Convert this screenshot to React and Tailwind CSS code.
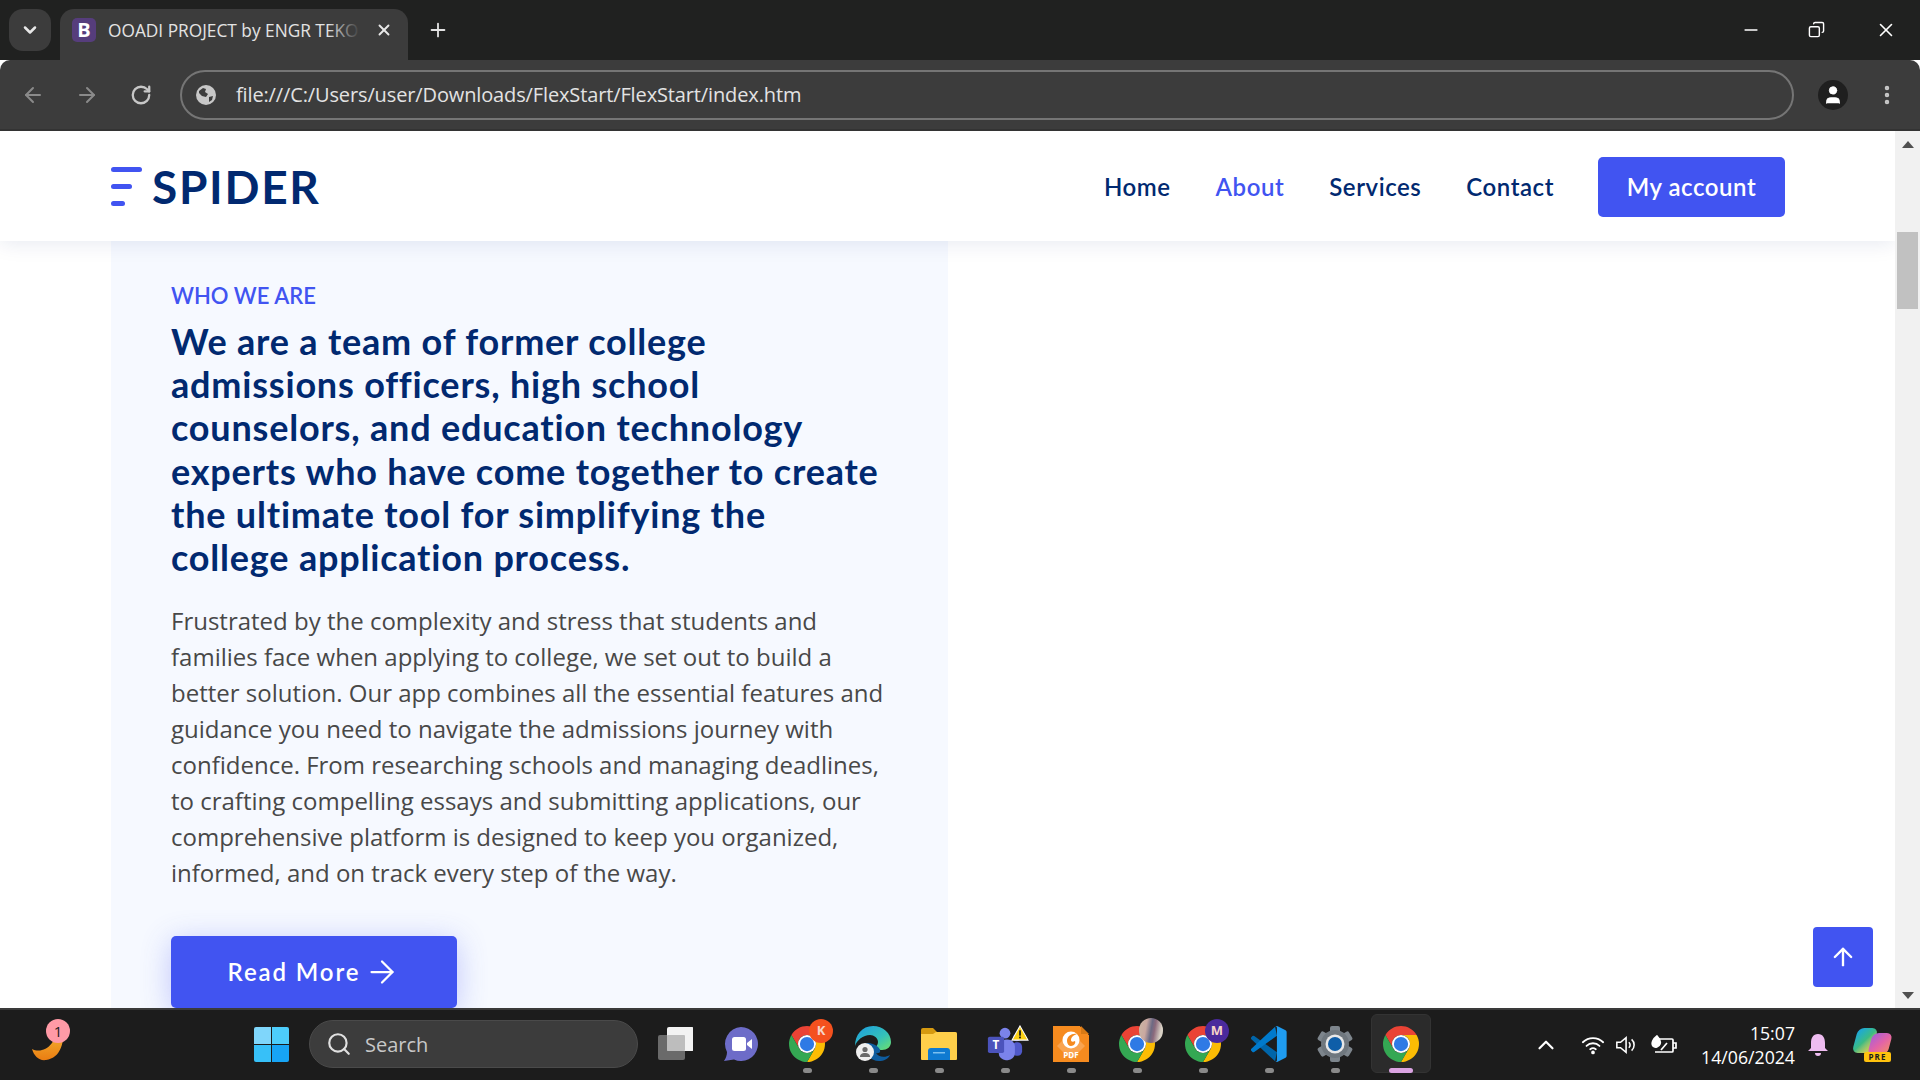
import React from "react";
import { ArrowLeft, ArrowRight, ArrowUp, ChevronDown, ChevronUp, MoreVertical, Plus, RotateCw, Search, User, X, Copy, Minus } from "lucide-react";

const headingFont = "font-['Lato',sans-serif]";

const ChromeLogo = () => (
  <svg viewBox="0 0 48 48" className="w-9 h-9">
    <path fill="#ea4335" d="M24 12h20.78A24 24 0 0 0 3.22 12L13.6 30A12 12 0 0 1 24 12z" />
    <path fill="#fbbc04" d="M44.78 12H24a12 12 0 0 1 10.4 18L24 48A24 24 0 0 0 44.78 12z" />
    <path fill="#34a853" d="M3.22 12A24 24 0 0 0 24 48l10.4-18a12 12 0 0 1-20.8 0z" />
    <circle cx="24" cy="24" r="12" fill="#fff" />
    <circle cx="24" cy="24" r="9.5" fill="#2f7ae5" />
  </svg>
);

const TaskView = () => (
  <svg viewBox="0 0 36 36" className="w-9 h-9">
    <rect x="1" y="9" width="27" height="25" rx="2" fill="#6a6a6a" />
    <rect x="10" y="1" width="27" height="24" rx="2" fill="#f2f2f2" />
    <rect x="10" y="9" width="18" height="16" rx="1" fill="#bdbdbd" />
  </svg>
);

const Meet = () => (
  <svg viewBox="0 0 36 36" className="w-9 h-9">
    <path fill="#6d6cc8" d="M18 1a17 17 0 1 1-7 32.5L1 35c2-3 3-6 3-9A17 17 0 0 1 18 1z" />
    <rect x="9" y="11" width="14" height="14" rx="2.5" fill="#fff" />
    <path fill="#fff" d="M24 17l5-4v10l-5-4z" />
  </svg>
);

const Edge = () => (
  <svg viewBox="0 0 36 36" className="w-9 h-9">
    <defs>
      <linearGradient id="edgeA" x1="0" y1="0" x2="1" y2="1">
        <stop offset="0" stopColor="#1b9de2" />
        <stop offset="0.6" stopColor="#35c1b8" />
        <stop offset="1" stopColor="#6fe06b" />
      </linearGradient>
    </defs>
    <path fill="url(#edgeA)" d="M18 0c10 0 18 7 18 16 0 5-4 8-9 8-3 0-6-1-6-3 0-1 2-2 2-5 0-4-4-7-8-7C8 9 2 14 0 20 0 9 7 0 18 0z" />
    <path fill="#0f5c9e" d="M9 20c0 8 7 15 15 15 5 0 9-2 11-6-5 3-12 2-14-2 4 1 6-2 2-6-5-4-14-6-14-1z" />
    <circle cx="10" cy="26" r="9" fill="#f0f0f0" />
    <circle cx="10" cy="23.5" r="2.6" fill="#6b6b6b" />
    <path fill="#6b6b6b" d="M5 31c0-3 2-4 5-4s5 1 5 4z" />
  </svg>
);

const Folder = () => (
  <svg viewBox="0 0 36 36" className="w-9 h-9">
    <path fill="#d69a10" d="M0 4a2 2 0 0 1 2-2h10l4 4h18a2 2 0 0 1 2 2v6H0z" />
    <path fill="#ffcf4a" d="M0 8h12l3-2h19a2 2 0 0 1 2 2v25a1 1 0 0 1-1 1H1a1 1 0 0 1-1-1z" />
    <path fill="#0f7ad1" d="M7 34V25a3 3 0 0 1 3-3h16a3 3 0 0 1 3 3v9z" />
    <rect x="12" y="26" width="12" height="1.5" fill="#7cc0f0" />
  </svg>
);

const Teams = () => (
  <svg viewBox="0 0 40 40" className="w-9 h-9">
    <circle cx="20" cy="8" r="6" fill="#7b83eb" />
    <circle cx="33" cy="13" r="4" fill="#5059c9" />
    <rect x="28" y="18" width="11" height="15" rx="5" fill="#5059c9" />
    <rect x="13" y="15" width="18" height="23" rx="8" fill="#7b83eb" />
    <rect x="1" y="12" width="18" height="18" rx="2" fill="#4b53bc" />
    <text x="10" y="26" textAnchor="middle" fontSize="13" fontWeight="700" fill="#fff" fontFamily="Open Sans, sans-serif">T</text>
  </svg>
);

const Foxit = () => (
  <svg viewBox="0 0 36 36" className="w-9 h-9">
    <path fill="#f68b1f" d="M0 0h27l9 9v27H0z" />
    <path fill="#1c1c1c" d="M27 0h9v9z" />
    <path fill="#d97a15" d="M28 0l8 8h-8z" />
    <path fill="#f9a450" d="M18 6l14 14-14 14L4 20z" />
    <circle cx="18" cy="14" r="8.5" fill="#fff" />
    <path fill="#f68b1f" d="M24 8c-5-1-10 2-10 7 0 3 2 5 4 5 3 0 5-3 4-5-2 1-4 1-4-1 0-3 3-5 6-6z" />
    <text x="18" y="32" textAnchor="middle" fontSize="8" fontWeight="700" fill="#fff" fontFamily="Open Sans, sans-serif">PDF</text>
  </svg>
);

const VsCode = () => (
  <svg viewBox="0 0 100 100" className="w-9 h-9">
    <path fill="#0065a9" d="M4 28a4 4 0 0 1 5 0l63 45-5 25L1 37a4 4 0 0 1 0-6z" />
    <path fill="#007acc" d="M4 72a4 4 0 0 0 5 0l63-45-5-25L1 63a4 4 0 0 0 0 6z" />
    <path fill="#1f9cf0" d="M67 2a6 6 0 0 1 7-1l22 11a6 6 0 0 1 3 5v66a6 6 0 0 1-3 5L74 99a6 6 0 0 1-7-1c3 2 5 0 5-3V5c0-3-2-5-5-3z" />
  </svg>
);

const Gear = () => (
  <svg viewBox="0 0 36 36" className="w-9 h-9">
    {[0, 60, 120, 180, 240, 300].map((deg) => (
      <rect key={deg} x="13" y="0" width="10" height="12" rx="2" fill="#7d858c" transform={`rotate(${deg} 18 18)`} />
    ))}
    <circle cx="18" cy="18" r="14" fill="#6f777e" />
    <circle cx="18" cy="18" r="9.5" fill="#e8e8e8" />
    <circle cx="18" cy="18" r="7" fill="#0f5ea8" />
  </svg>
);

const Pip = ({ active }) => (
  <div className={active ? "w-6 h-[5px] rounded-full bg-[#dba4e3]" : "w-[9px] h-[5px] rounded-full bg-[#8a8a8a]"} />
);

const TaskItem = ({ children, pip = true, active = false, badge = null }) => (
  <div className="relative w-[66px] flex flex-col items-center">
    {active && <div className="absolute left-[3px] top-[-12px] w-[60px] h-[59px] rounded-md bg-[#2b2b2b] border border-[#333333]" />}
    <div className="relative h-9 flex items-center justify-center">{children}</div>
    {badge}
    <div className="relative mt-[6px] h-[5px]">{pip && <Pip active={active} />}</div>
  </div>
);

const LetterBadge = ({ letter, color }) => (
  <div className={`absolute left-[35px] top-[-7px] w-6 h-6 rounded-full flex items-center justify-center text-[13px] font-bold text-[#f6d5c8] font-['Open_Sans',sans-serif] ${color}`}>
    {letter}
  </div>
);

const BrowserChrome = () => (
  <div className="shrink-0 font-['Open_Sans',sans-serif]">
    {/* tab strip */}
    <div className="h-[60px] bg-[#202120] flex items-start pl-[9px] pt-[9px]">
      <div className="w-[42px] h-[42px] rounded-[14px] bg-[#3c3c3c] flex items-center justify-center">
        <ChevronDown size={20} strokeWidth={3} className="text-[#e8e8e8]" />
      </div>
      <div className="relative ml-[9px] w-[348px] h-[51px] rounded-t-[14px] bg-[#3c3c3c] flex items-start pl-3 pt-[9px]">
        <div className="w-6 h-6 rounded-[5px] bg-[#563d7c] flex items-center justify-center text-[20px] font-bold leading-none text-white">B</div>
        <div className="relative ml-3 mt-[1px] w-[252px] overflow-hidden whitespace-nowrap text-[17.3px] leading-6 text-[#e3e3e3]">
          OOADI PROJECT by ENGR TEKO
          <div className="absolute right-0 top-0 w-8 h-6 bg-gradient-to-r from-transparent to-[#3c3c3c]" />
        </div>
        <X size={18} strokeWidth={2.5} className="ml-[15px] mt-[3px] text-[#e8e8e8]" />
      </div>
      <Plus size={22} strokeWidth={2} className="ml-[19px] mt-[10px] text-[#e3e3e3]" />
      <div className="ml-auto flex items-center h-10 pr-[23px] pt-[1px] gap-[48px] text-white">
        <Minus size={20} strokeWidth={2} className="relative -left-[1px]" />
        <Copy size={17} strokeWidth={2} className="relative -left-[2px] -scale-x-100" />
        <X size={22} strokeWidth={1.75} />
      </div>
    </div>
    {/* toolbar */}
    <div className="h-[69px] bg-[#3c3c3c] rounded-t-[10px] flex items-center pl-[21px] pr-[21px]">
      <ArrowLeft size={24} strokeWidth={2} className="text-[#8a8a8a]" />
      <ArrowRight size={24} strokeWidth={2} className="ml-[30px] text-[#8a8a8a]" />
      <RotateCw size={22} strokeWidth={2.5} className="ml-[31px] text-[#c7c7c7]" />
      <div className="ml-[28px] w-[1615px] h-[50px] rounded-full border-2 border-[#757575] flex items-center pl-[14px]">
        <svg viewBox="0 0 20 20" className="w-5 h-5 shrink-0">
          <circle cx="10" cy="10" r="10" fill="#c7c7c7" />
          <path fill="#3c3c3c" d="M3 6l4-3 3 1-1 3 3 2-2 3-4-1-3-3zM13 12l4-1-1 4-3 2z" />
        </svg>
        <span className="ml-[20px] text-[20px] text-[#e3e3e3] whitespace-nowrap tracking-[-0.13px]">file:///C:/Users/user/Downloads/FlexStart/FlexStart/index.htm</span>
      </div>
      <div className="ml-[24px] w-[30px] h-[30px] rounded-full bg-[#1f1f1f] flex items-center justify-center">
        <User size={22} fill="#ffffff" strokeWidth={1} className="text-white" />
      </div>
      <MoreVertical size={24} strokeWidth={2.5} className="ml-[27px] text-[#c7c7c7]" />
    </div>
    <div className="h-[2px] bg-[#333333]" />
  </div>
);

const Header = () => (
  <header className="relative z-10 h-[110px] shrink-0 bg-white shadow-[0_2px_20px_rgba(1,41,112,0.1)] flex items-center pt-[2px] pl-[111px] pr-[110px]">
    <div className="flex items-center">
      <svg viewBox="0 0 32 40" className="w-8 h-10">
        <rect x="0" y="0" width="31" height="5" rx="2.5" fill="#4154f1" />
        <rect x="0" y="17" width="21" height="5" rx="2.5" fill="#4154f1" />
        <rect x="0" y="34" width="14" height="5" rx="2.5" fill="#4154f1" />
      </svg>
      <span className={`ml-[9px] text-[46px] leading-none font-bold text-[#012970] tracking-[1.7px] ${headingFont}`}>SPIDER</span>
    </div>
    <nav className={`ml-auto flex items-center text-[24px] font-semibold text-[#012970] tracking-[0.55px] ${headingFont}`}>
      <a className="mr-[45px]">Home</a>
      <a className="mr-[45px] text-[#4154f1]">About</a>
      <a className="mr-[45px]">Services</a>
      <a className="mr-[44px]">Contact</a>
      <a className="w-[187px] h-[60px] rounded-[5px] bg-[#4154f1] text-white flex items-center justify-center">My account</a>
    </nav>
  </header>
);

const About = () => (
  <section className="w-[837px] ml-[111px] -mt-[2px] flex-1 bg-[#f6f9ff] pl-[60px] pt-[43px] overflow-hidden">
    <h3 className={`text-[22px] leading-[28px] font-semibold text-[#4154f1] ${headingFont}`}>WHO WE ARE</h3>
    <h2 className={`mt-[10px] text-[36px] leading-[43.2px] font-bold text-[#012970] whitespace-nowrap tracking-[0.8px] ${headingFont}`}>
      We are a team of former college
      <br />
      admissions officers, high school
      <br />
      counselors, and education technology
      <br />
      experts who have come together to create
      <br />
      the ultimate tool for simplifying the
      <br />
      college application process.
    </h2>
    <p className="mt-[24px] text-[24px] leading-[36px] text-[#484848] whitespace-nowrap font-['Open_Sans',sans-serif]">
      Frustrated by the complexity and stress that students and
      <br />
      families face when applying to college, we set out to build a
      <br />
      better solution. Our app combines all the essential features and
      <br />
      guidance you need to navigate the admissions journey with
      <br />
      confidence. From researching schools and managing deadlines,
      <br />
      to crafting compelling essays and submitting applications, our
      <br />
      comprehensive platform is designed to keep you organized,
      <br />
      informed, and on track every step of the way.
    </p>
    <a className={`mt-[45px] w-[286px] h-[72px] rounded-[5px] bg-[#4154f1] text-white text-[24px] font-semibold tracking-[1.9px] flex items-center justify-center shadow-[0_5px_30px_rgba(65,84,241,0.3)] ${headingFont}`}>
      Read More
      <ArrowRight size={36} strokeWidth={1.5} className="ml-[4px]" />
    </a>
  </section>
);

const Scrollbar = () => (
  <div className="w-[25px] shrink-0 bg-[#f1f1f1] flex flex-col items-center">
    <div className="h-[26px] flex items-center">
      <div className="w-0 h-0 border-x-[6px] border-x-transparent border-b-[7px] border-b-[#505050]" />
    </div>
    <div className="mt-[75px] w-[21px] h-[77px] bg-[#c1c1c1]" />
    <div className="mt-auto h-[26px] flex items-center">
      <div className="w-0 h-0 border-x-[6px] border-x-transparent border-t-[7px] border-t-[#505050]" />
    </div>
  </div>
);

const Taskbar = () => (
  <div className="relative shrink-0 h-[72px] bg-[#1c1c1c] border-t-2 border-[#3a3a3a] flex items-start text-[#f2f2f2] font-['Open_Sans',sans-serif]">
    {/* widget */}
    <div className="relative w-[254px] h-full">
      <svg viewBox="0 0 36 40" className="absolute left-[31px] top-[12px] w-9 h-10">
        <defs>
          <linearGradient id="flame" x1="0" y1="0" x2="0" y2="1">
            <stop offset="0" stopColor="#f6c33b" />
            <stop offset="1" stopColor="#ea7d12" />
          </linearGradient>
        </defs>
        <path fill="url(#flame)" d="M32 2c2 18-2 34-17 36C8 39 3 34 1 27c6 3 14 2 20-6 3-5 6-13 11-19z" />
      </svg>
      <div className="absolute left-[46px] top-[9px] w-6 h-6 rounded-full bg-[#ff9aa6] flex items-center justify-center text-[15px] text-[#1c1c1c]">1</div>
    </div>
    {/* start */}
    <div className="mt-[17px] w-[35px] h-[35px] grid grid-cols-2 gap-[1px] shrink-0">
      <div className="rounded-tl-[2px] bg-[#7fd6fb]" />
      <div className="rounded-tr-[2px] bg-[#4dcdfb]" />
      <div className="rounded-bl-[2px] bg-[#37c0f8]" />
      <div className="rounded-br-[2px] bg-[#17a4f5]" />
    </div>
    {/* search */}
    <div className="ml-[20px] mt-[10px] w-[329px] h-[48px] rounded-full bg-[#3c3c3c] border border-[#4a4a4a] flex items-center pl-[16px] text-[#c8c8c8]">
      <Search size={26} strokeWidth={2} className="text-[#e0e0e0]" />
      <span className="ml-[13px] mt-[1px] text-[20px]">Search</span>
    </div>
    {/* pinned apps */}
    <div className="ml-[4px] pt-[16px] flex items-start">
      <TaskItem pip={false}><TaskView /></TaskItem>
      <TaskItem pip={false}><Meet /></TaskItem>
      <TaskItem badge={<LetterBadge letter="K" color="bg-[#f4511e]" />}><ChromeLogo /></TaskItem>
      <TaskItem><Edge /></TaskItem>
      <TaskItem><Folder /></TaskItem>
      <TaskItem
        badge={
          <svg viewBox="0 0 20 18" className="absolute left-[39px] top-[-1px] w-[18px] h-4">
            <path d="M10 1l9 16H1z" fill="#fcd116" stroke="#ffffff" strokeWidth="1.2" />
            <rect x="9" y="6" width="2" height="6" fill="#1c1c1c" />
            <rect x="9" y="13" width="2" height="2" fill="#1c1c1c" />
          </svg>
        }
      >
        <Teams />
      </TaskItem>
      <TaskItem><Foxit /></TaskItem>
      <TaskItem
        badge={<div className="absolute left-[35px] top-[-8px] w-6 h-[25px] rounded-full bg-[linear-gradient(100deg,#c9b7a4_0%,#c9a8a0_30%,#6c6a84_50%,#8c6a7c_62%,#d8d0c4_85%)]" />}
      >
        <ChromeLogo />
      </TaskItem>
      <TaskItem badge={<LetterBadge letter="M" color="bg-[#4a2a9c]" />}><ChromeLogo /></TaskItem>
      <TaskItem><VsCode /></TaskItem>
      <TaskItem><Gear /></TaskItem>
      <TaskItem active><ChromeLogo /></TaskItem>
    </div>
    {/* tray */}
    <div className="ml-auto h-full flex items-center pr-[30px]">
      <ChevronUp size={26} strokeWidth={2} className="text-white" />
      <svg viewBox="0 0 26 20" fill="none" stroke="#fff" strokeWidth="2" strokeLinecap="round" className="ml-[22px] w-6 h-5">
        <path d="M2 7a16 16 0 0 1 22 0M6 11a10 10 0 0 1 14 0M10 14.5a5 5 0 0 1 6 0" />
        <circle cx="13" cy="18" r="1" fill="#fff" />
      </svg>
      <svg viewBox="0 0 26 20" fill="none" stroke="#fff" strokeWidth="1.7" className="ml-[10px] w-6 h-5">
        <path d="M2 7h4l6-5v16l-6-5H2z" />
        <path d="M15 7a4 4 0 0 1 0 6M18 4a8 8 0 0 1 0 12" />
      </svg>
      <svg viewBox="0 0 26 20" fill="none" stroke="#fff" strokeWidth="1.7" className="ml-[12px] w-[26px] h-5">
        <path d="M8 4h13a1 1 0 0 1 1 1v11a1 1 0 0 1-1 1H4" />
        <path d="M22 8h3v5h-3" />
        <path fill="#fff" d="M6 1C2 4 0 8 2 11c2 2 6 1 7-2 1-3-1-6-3-8z" />
        <path d="M10 15l6-7" />
      </svg>
      <div className="ml-[24px] flex flex-col items-end text-[17.7px] leading-[24px] text-white">
        <span>15:07</span>
        <span>14/06/2024</span>
      </div>
      <svg viewBox="0 0 20 24" className="ml-[13px] w-5 h-6">
        <path fill="#eebcf0" d="M10 1c5 0 7 4 7 9v5l3 3H0l3-3v-5c0-5 2-9 7-9z" />
        <path fill="#eebcf0" d="M7 20h6a3 3 0 0 1-6 0z" />
      </svg>
      <div className="relative ml-[26px] w-[36px] h-[34px]">
        <div className="absolute left-[1px] top-0 w-[20px] h-[25px] rounded-[6px] -skew-x-[15deg] bg-gradient-to-br from-[#1da1e8] via-[#3dbb82] to-[#f5d020]" />
        <div className="absolute right-0 top-[5px] w-[20px] h-[22px] rounded-[6px] -skew-x-[15deg] bg-gradient-to-br from-[#a45bd8] via-[#e262a8] to-[#f58a5a]" />
        <div className="absolute right-[-1px] bottom-0 w-[27px] h-[10px] rounded-[2px] bg-[#ffc20e] flex items-center justify-center text-[8px] font-bold tracking-[1px] leading-none text-[#1c1c1c]">PRE</div>
      </div>
    </div>
  </div>
);

export default function App() {
  return (
    <div className="w-[1920px] h-[1080px] overflow-hidden flex flex-col bg-white">
      <BrowserChrome />
      <div className="flex-1 min-h-0 flex">
        <main className="relative flex-1 min-w-0 flex flex-col overflow-hidden bg-white">
          <Header />
          <About />
          {/* back to top button floats over the page */}
          <a className="absolute right-[22px] bottom-[21px] w-[60px] h-[60px] rounded-[4px] bg-[#4154f1] flex items-center justify-center text-white">
            <ArrowUp size={28} strokeWidth={2} />
          </a>
        </main>
        <Scrollbar />
      </div>
      <Taskbar />
    </div>
  );
}
